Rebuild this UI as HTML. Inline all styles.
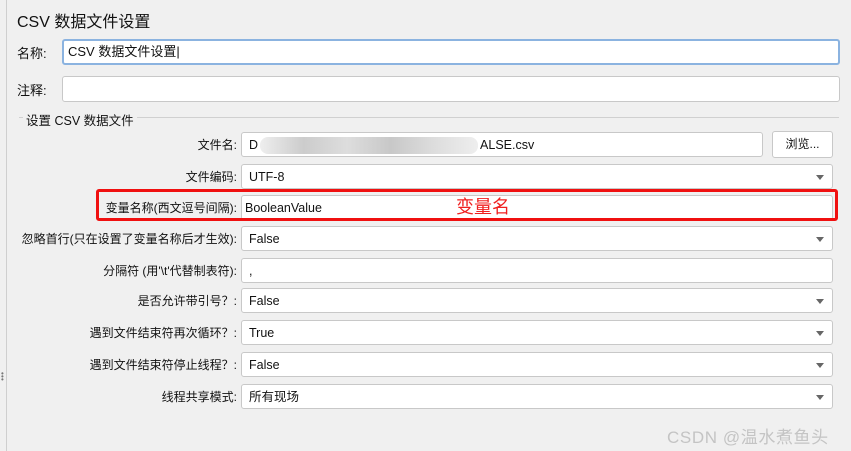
<!DOCTYPE html>
<html><head><meta charset="utf-8"><style>
body{margin:0;width:851px;height:451px;background:#f0f0f0;font-family:"Liberation Sans","Noto Sans CJK SC",sans-serif;font-size:12px;color:#111;position:relative;overflow:hidden}
.a{position:absolute}
.f{position:absolute;left:241px;width:592px;height:25px;background:#fff;border:1px solid #c8c8c8;border-radius:3px;box-sizing:border-box;line-height:24px;padding-left:7px;font-size:12.5px}
.l{position:absolute;right:614px;height:26px;line-height:26px;white-space:nowrap;font-size:12px}
.arr{position:absolute;right:8px;top:10px;width:0;height:0;border-left:4px solid transparent;border-right:4px solid transparent;border-top:5px solid #666}
</style></head><body>
<div class="a" style="left:6px;top:0;width:1px;height:451px;background:#cfcfcf"></div>
<div class="a" style="left:1px;top:372px;font-size:8px;line-height:3px;color:#777">•<br>•<br>•</div>
<div class="a" style="left:17px;top:8px;font-size:16px">CSV 数据文件设置</div>
<div class="a" style="left:17px;top:43px;font-size:13px">名称:</div>
<div class="a" style="left:62px;top:39px;width:778px;height:26px;border:2px solid #8bb3e0;background:#fff;border-radius:3px;box-sizing:border-box;line-height:22px;padding-left:4px;font-size:13px">CSV 数据文件设置|</div>
<div class="a" style="left:17px;top:80px;font-size:13px">注释:</div>
<div class="a" style="left:62px;top:76px;width:778px;height:26px;border:1px solid #c8c8c8;background:#fff;border-radius:3px;box-sizing:border-box"></div>
<div class="a" style="left:19px;top:117px;width:820px;height:1px;background:#d0d0d0"></div>
<div class="a" style="left:23px;top:110px;padding:0 3px;background:#f0f0f0;font-size:12.5px">设置 CSV 数据文件</div>

<div class="l" style="top:132px">文件名:</div>
<div class="f" style="top:132px;width:522px">D<span style="display:inline-block;width:218px;height:17px;vertical-align:middle;background:linear-gradient(90deg,#eee,#ccc 20%,#ddd 40%,#c8c8c8 60%,#ddd 80%,#eee);border-radius:8px;margin:0 2px"></span>ALSE.csv</div>
<div class="a" style="left:772px;top:131px;width:61px;height:27px;border:1px solid #c8c8c8;border-radius:3px;background:#fff;box-sizing:border-box;text-align:center;line-height:25px">浏览...</div>

<div class="l" style="top:164px">文件编码:</div>
<div class="f" style="top:164px">UTF-8<div class="arr"></div></div>
<div class="l" style="top:195px">变量名称(西文逗号间隔):</div>
<div class="f" style="top:195px;padding-left:3px">BooleanValue</div>
<div class="a" style="left:96px;top:189px;width:742px;height:32px;border:3px solid #f01010;border-radius:3px;box-sizing:border-box"></div>
<div class="a" style="left:456px;top:193px;color:#f02020;font-size:18px">变量名</div>
<div class="l" style="top:226px">忽略首行(只在设置了变量名称后才生效):</div>
<div class="f" style="top:226px">False<div class="arr"></div></div>
<div class="l" style="top:258px">分隔符 (用'\t'代替制表符):</div>
<div class="f" style="top:258px">,</div>
<div class="l" style="top:288px">是否允许带引号？:</div>
<div class="f" style="top:288px">False<div class="arr"></div></div>
<div class="l" style="top:320px">遇到文件结束符再次循环？:</div>
<div class="f" style="top:320px">True<div class="arr"></div></div>
<div class="l" style="top:352px">遇到文件结束符停止线程？:</div>
<div class="f" style="top:352px">False<div class="arr"></div></div>
<div class="l" style="top:384px">线程共享模式:</div>
<div class="f" style="top:384px">所有现场<div class="arr"></div></div>
<div class="a" style="left:667px;top:423px;font-size:17px;letter-spacing:0.6px;color:#c4c4c4">CSDN @温水煮鱼头</div>
</body></html>
